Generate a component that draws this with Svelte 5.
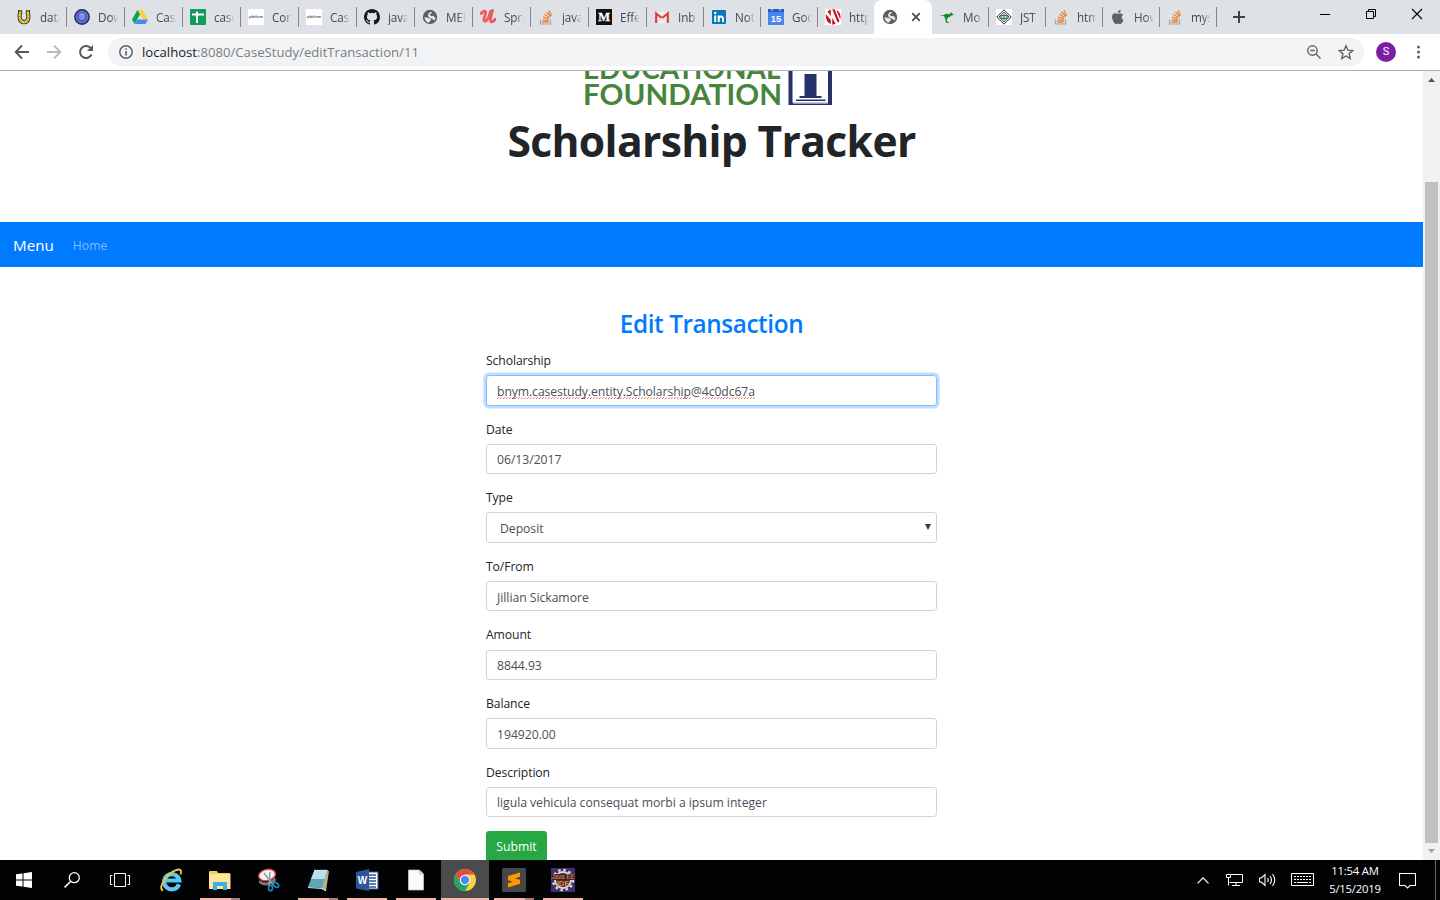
<script>
  const tabs = [
    { icon: 'horseshoe', text: 'data' },
    { icon: 'orb', text: 'Dow' },
    { icon: 'drive', text: 'Cas' },
    { icon: 'sheet', text: 'case' },
    { icon: 'platform', text: 'Cor' },
    { icon: 'platform', text: 'Cas' },
    { icon: 'github', text: 'java' },
    { icon: 'globe', text: 'MEI' },
    { icon: 'udemy', text: 'Spri' },
    { icon: 'stack', text: 'java' },
    { icon: 'medium', text: 'Effe' },
    { icon: 'gmail', text: 'Inb' },
    { icon: 'linkedin', text: 'Not' },
    { icon: 'calendar', text: 'Goo' },
    { icon: 'stripes', text: 'http' },
    { icon: 'globe', text: '', active: true },
    { icon: 'kangaroo', text: 'Mo' },
    { icon: 'diamond', text: 'JST' },
    { icon: 'stack', text: 'htm' },
    { icon: 'apple', text: 'How' },
    { icon: 'stack', text: 'mys' }
  ];
  const fields = [
    { label: 'Scholarship', value: '', focus: true },
    { label: 'Date', value: '06/13/2017' },
    { label: 'Type', value: 'Deposit', select: true },
    { label: 'To/From', value: 'Jillian Sickamore' },
    { label: 'Amount', value: '8844.93' },
    { label: 'Balance', value: '194920.00' },
    { label: 'Description', value: 'ligula vehicula consequat morbi a ipsum integer' }
  ];
  const apps = ['ie', 'folder', 'snip', 'notepad', 'word', 'file', 'chrome', 'sublime', 'eclipse'];
</script>

{#snippet favicon(kind)}
  <svg class="fav" viewBox="0 0 16 16" width="16" height="16">
    {#if kind === 'horseshoe'}
      <path d="M4.500 2.500C2.500 8 3.500 13.200 8 13.200S13.500 8 11.500 2.500" fill="none" stroke="#2f2a14" stroke-width="4.200" />
      <path d="M4.500 2.500C2.500 8 3.500 13.200 8 13.200S13.500 8 11.500 2.500" fill="none" stroke="#e8cf52" stroke-width="2.400" />
      <path d="M2 2h4M10 2h4" stroke="#3d3513" stroke-width="2.200" /><path d="M3 2h2M11 2h2" stroke="#e8cf52" />
      <path d="M4.300 4C2.500 9 4 13.200 8 13.200S13.500 9 11.700 4" fill="none" stroke="#6b5c1c" stroke-width=".8" stroke-dasharray="1 2" />
    {:else if kind === 'orb'}
      <circle cx="8" cy="8" r="7.900" fill="#22285f" />
      <circle cx="8" cy="8" r="6" fill="#5365cf" stroke="#8791d8" stroke-width=".7" />
      <circle cx="8" cy="8" r="3.800" fill="#7d8ce8" stroke="#4252b5" />
      <path d="M5.500 5.800q2.500-1.800 5 0" stroke="#b5befa" fill="none" />
    {:else if kind === 'drive'}
      <path d="M5.500 1h5L16 10.500h-5z" fill="#ffcf3e" />
      <path d="M5.500 1 0 10.500 2.600 15 8 5.500z" fill="#12a05d" />
      <path d="M5.500 10.500H16L13.400 15H2.600z" fill="#4688f1" />
    {:else if kind === 'sheet'}
      <rect width="16" height="16" rx="1" fill="#109d58" />
      <path d="M2 5.500h12M7 2.500V14" stroke="#fff" stroke-width="2" />
    {:else if kind === 'platform'}
      <rect width="16" height="16" fill="#fff" />
      <text x="1" y="9" font-family="Liberation Sans" font-style="italic" font-size="4" font-weight="bold" textLength="14" lengthAdjust="spacingAndGlyphs" fill="#66615d">platform</text>
    {:else if kind === 'github'}
      <path fill="#181818" d="M8 0C3.580 0 0 3.580 0 8c0 3.540 2.290 6.530 5.470 7.590.4.070.55-.17.55-.38v-1.490c-2.010.37-2.530-.49-2.690-.94-.09-.23-.48-.94-.82-1.130-.28-.15-.68-.52-.01-.53.63-.01 1.080.58 1.230.82.72 1.210 1.870.87 2.330.66.070-.52.28-.87.51-1.070-1.780-.2-3.640-.89-3.640-3.950 0-.87.31-1.590.82-2.150-.08-.2-.36-1.020.08-2.120 0 0 .67-.21 2.200.82a7.400 7.400 0 0 1 4 0c1.530-1.040 2.200-.82 2.200-.82.44 1.100.16 1.920.08 2.120.51.56.82 1.270.82 2.150 0 3.070-1.870 3.750-3.650 3.950.29.25.54.73.54 1.480v2.200c0 .21.15.46.55.38A8 8 0 0 0 16 8c0-4.420-3.580-8-8-8" />
    {:else if kind === 'globe'}
      <circle cx="8" cy="8" r="7.200" fill="#5b5f64" />
      <path d="M7.800 3.200 10.500 2.800 8.800 4.800 7.500 5.600 9.500 7.200 11.500 6.800 12.500 8.500 13.600 8.200Q13.500 10 12.300 11.400L10 9.600H8.200L6 7 6.500 4.500zM2.400 8.300 6 8.800 8.800 10.300 8.600 12 7 12.600 7.300 13.900Q3.200 13.200 2.400 8.300z" fill="#e9ebee" />
    {:else if kind === 'udemy'}
      <path d="M1 4.500Q4 1 5.500 2.800C6.500 4 3 9.500 4 11.300 6 14 9.500 8 10.500 2.500M12.500 1.500C11.500 5 9.500 11 11 12.500q1.700 1.200 4-2.200" fill="none" stroke="#ef5a5f" stroke-width="2.900" stroke-linecap="round" />
    {:else if kind === 'stack'}
      <path d="M2.500 10.500V15h10v-4.500" fill="none" stroke="#a0a7ae" stroke-width="1.200" />
      <path d="M4.300 13h6.200M4.500 10.800l6.200.7M5.100 8.100l6 1.800M6.300 5.300l5.400 3.200M8.500 3l4.300 4.500M11 1.200l2.500 5.500" stroke="#ee8032" stroke-width="1.300" />
    {:else if kind === 'medium'}
      <rect width="16" height="16" fill="#111" />
      <text x="8" y="12.300" text-anchor="middle" font-family="Liberation Serif" font-weight="bold" font-size="12.500" stroke="#fff" stroke-width=".3" fill="#fff">M</text>
    {:else if kind === 'gmail'}
      <rect x="1" y="3" width="14" height="11" fill="#eee" />
      <path d="M2.200 14V4.500L8 9l5.800-4.500V14" fill="none" stroke="#d84336" stroke-width="2.200" />
      <path d="m3.500 13 4.500-4 4.500 4" fill="none" stroke="#ddd" />
    {:else if kind === 'linkedin'}
      <rect x="1" y="1" width="14" height="14" rx="1" fill="#0878b5" />
      <path d="M4.200 6.500V13M7.700 6.500V13M7.700 10q0-2.500 2.200-2.500T12 9.800V13" stroke="#fff" stroke-width="2" fill="none" />
      <circle cx="4.200" cy="4" r="1.200" fill="#fff" />
    {:else if kind === 'calendar'}
      <rect width="16" height="16" rx="1" fill="#4784ed" />
      <path d="M0 1q0-1 1-1h14q1 0 1 1v2H0z" fill="#2859bd" /><path d="M3 1h2M11 1h2" stroke="#dce8ff" />
      <text x="8" y="12.500" text-anchor="middle" font-family="Liberation Sans" font-weight="bold" font-size="9.500" fill="#fff">15</text>
    {:else if kind === 'stripes'}
      <rect width="16" height="16" fill="#fff" />
      <path d="M5.800.600V7L2.500 2.800Q4 1 5.800.600zM.800 5l5 6v4Q.300 13 .800 5zM7.200.300h2.300l5 12-1.700 1.500zM11.200.800Q16.500 3.500 15.300 10.500zM7.200 9l3.500 5.800-3.500.9z" fill="#cb1017" />
    {:else if kind === 'kangaroo'}
      <path d="M.500 6.200 5 6q3-2.300 5.500-.5L12 3l.7 1.200 2.300 1.600-2.500.8L11 7.800 9.200 8.200l-1.400 2L8.500 13H10v.7H7L6.300 10 5 7z" fill="#128a1e" />
    {:else if kind === 'diamond'}
      <rect width="16" height="16" fill="#fff" />
      <path d="m8 .8 7.200 7.200L8 15.200.8 8z" fill="#fff" stroke="#333" />
      <path d="m8 3 5 5-5 5-5-5z" fill="#dce5df" stroke="#50625a" />
      <path d="M5 6.500h6v3H5z" fill="none" stroke="#257c51" stroke-width="1.200" /><path d="M8 5v6" stroke="#555" />
    {:else if kind === 'apple'}
      <path d="M10.800.8q-3 .5-2.800 3.400 2.600-.1 2.800-3.400M8 5.100C3.500 2.700 1.500 6 2.100 9q.8 4.200 3.300 6 1 .3 2.600-.5 1.500.8 2.700.5Q13 13.400 13.600 11q-3.700-2-.5-5.200Q11 3.700 8 5.100" fill="#5f6164" />
    {/if}
  </svg>
{/snippet}

{#snippet appIcon(kind)}
  <svg viewBox="0 0 24 24" width="24" height="24">
    {#if kind === 'ie'}
      <path d="M20 16.200A7.600 7.600 0 1 1 20.300 12.500H7" fill="none" stroke="#5bc8f4" stroke-width="4.200" />
      <path d="M4 22.500C-2 20.500 8 4 19 1.500q4.500-.5 2.500 5" fill="none" stroke="#f4c531" stroke-width="1.900" />
    {:else if kind === 'folder'}
      <path d="M1 4q0-1 1-1h7l1 2h12v16H1z" fill="#f5cd5b" /><path d="M1 6h21.500v15H1z" fill="#ffe69a" />
      <path d="M5 22v-8h14v8h-4v-4H9v4z" fill="#3eaee5" />
    {:else if kind === 'snip'}
      <path d="M2 12q8 6 16-3l1 4Q9 21 2 15z" fill="#777" />
      <ellipse cx="10" cy="7" rx="8.500" ry="5.500" transform="rotate(-12 10 7)" fill="#f4f4f4" stroke="#d94349" stroke-width="1.400" />
      <path d="m7 5 10 13M13 4l-1 15" stroke="#8c9daa" stroke-width="1.500" />
      <ellipse cx="13.500" cy="20" rx="2" ry="2.800" fill="none" stroke="#248fc7" stroke-width="1.500" /><ellipse cx="19" cy="17" rx="3" ry="2" transform="rotate(35 19 17)" fill="none" stroke="#248fc7" stroke-width="1.500" />
    {:else if kind === 'notepad'}
      <path d="m9 2 14 1-3 20-4-2z" fill="#b4b08f" /><path d="M8.500 2H21l-5 18-14-1z" fill="#5fa5b8" /><path d="M8.500 2H21l-2.500 9H5z" fill="#bcdee5" />
      <path d="M8.500 2.500H22" stroke="#e6eeee" stroke-width="1.500" stroke-dasharray="1 1" /><path d="m2 19.500 14 1 4 2.500" fill="none" stroke="#d7e7e7" />
    {:else if kind === 'word'}
      <rect x="11" y="4" width="12" height="17" fill="#fff" stroke="#2b579a" /><path d="M14 7h7M14 10h7M14 13h7M14 16h7M14 19h7" stroke="#2b579a" stroke-width="1.300" />
      <path d="m1 4 13-3v22L1 20.500z" fill="#2b579a" /><text x="7.500" y="16" text-anchor="middle" font-family="Liberation Sans" font-size="10" font-weight="bold" fill="#fff">W</text>
    {:else if kind === 'file'}
      <path d="M4.500 2h11l4 4v16h-15z" fill="#fafafa" stroke="#ccc" stroke-width=".7" /><path d="M15.500 2v4h4" fill="none" stroke="#bbb" />
    {:else if kind === 'chrome'}
      <circle cx="12" cy="12" r="11" fill="#fbce43" />
      <path d="M2.500 6.500A11 11 0 0 1 21.500 6.500H12L7.200 14.700z" fill="#e34c3f" />
      <path d="M2.500 6.500A11 11 0 0 0 12 23l4.800-8.300L12 17l-4.800-2.300z" fill="#20a565" />
      <circle cx="12" cy="12" r="5.300" fill="#fff" /><circle cx="12" cy="12" r="4.200" fill="#4a8af4" />
    {:else if kind === 'sublime'}
      <rect width="24" height="24" rx="1.500" fill="#474747" /><path d="m6 8 12-3.500v4.300L13 10.500l5 1.300v4L6 19.500v-4.300l5-1.500-5-1.500z" fill="#ff9800" />
    {:else}
      <rect width="24" height="24" fill="#413065" /><circle cx="12" cy="12" r="8" fill="#34294e" stroke="#d9d7dd" stroke-width="2" />
      <circle cx="12" cy="12" r="10" fill="none" stroke="#d9d7dd" stroke-width="2.500" stroke-dasharray="2.500 2.740" />
      <rect x="1" y="6" width="22" height="6" fill="#36243b" />
      <text x="12" y="11.300" text-anchor="middle" font-family="Liberation Sans" font-size="6.500" textLength="23" lengthAdjust="spacingAndGlyphs" fill="#f28d22">Java EE</text>
      <text x="12" y="17.500" text-anchor="middle" font-family="Liberation Sans" font-size="7.500" font-weight="bold" fill="#f28d22">IDE</text>
    {/if}
  </svg>
{/snippet}

<div class="screen">
  <div class="strip">
    {#each tabs as tab, i}
      <div class="tab" class:narrow={i > 10 && i !== 15} class:active={tab.active} class:nosep={i === 14}>
        {@render favicon(tab.icon)}
        {#if tab.active}
          <svg class="close" width="10" height="10" viewBox="0 0 10 10"><path d="m1.200 1.200 7.600 7.600m0-7.600L1.200 8.800" stroke="#484b50" stroke-width="1.700" /></svg>
        {:else}
          <span>{tab.text}</span>
        {/if}
      </div>
    {/each}
    <svg class="plus" width="12" height="12" viewBox="0 0 12 12"><path d="M6 0v12M0 6h12" stroke="#3e4145" stroke-width="2" /></svg>
    <div class="window-buttons">
      <svg width="12" height="12" viewBox="0 0 12 12"><path d="M1 6.500h10" stroke="#000" /></svg>
      <svg width="12" height="12" viewBox="0 0 12 12"><path d="M1.500 3.500h7v7h-7zM3.500 3V1.500h7v7H9" fill="none" stroke="#000" /></svg>
      <svg width="12" height="12" viewBox="0 0 12 12"><path d="m1 1 10 10M11 1 1 11" stroke="#000" stroke-width="1.100" /></svg>
    </div>
  </div>

  <div class="toolbar">
    <svg width="16" height="16" viewBox="0 0 16 16"><path d="M15 8H2M8 1.500 1.700 8 8 14.500" fill="none" stroke="#54575b" stroke-width="1.900" /></svg>
    <svg width="16" height="16" viewBox="0 0 16 16"><path d="M1 8h13M8 1.500 14.300 8 8 14.500" fill="none" stroke="#b9bbbe" stroke-width="1.900" /></svg>
    <svg width="16" height="16" viewBox="0 0 16 16"><path d="M13.500 10.500A6 6 0 1 1 12.300 3.800L14 5.500" fill="none" stroke="#54575b" stroke-width="2" /><path d="M15 1v6H9z" fill="#54575b" /></svg>
    <div class="omnibox">
      <svg width="14" height="14" viewBox="0 0 14 14"><circle cx="7" cy="7" r="6.200" fill="none" stroke="#5f6368" stroke-width="1.500" /><path d="M7 6v4.500M7 3.200v1.600" stroke="#5f6368" stroke-width="1.600" /></svg>
      <div class="url"><b>localhost</b>:8080/CaseStudy/editTransaction/11</div>
      <svg class="lens" width="14" height="14" viewBox="0 0 14 14"><circle cx="5.500" cy="5.500" r="4.700" fill="none" stroke="#5f6368" stroke-width="1.400" /><path d="m9 9 4.500 4.500M3.300 5.500h4.400" stroke="#5f6368" stroke-width="1.400" /></svg>
      <svg width="16" height="16" viewBox="0 0 16 16"><path d="m8 1.800 1.900 4.400 4.800.4-3.600 3.200 1.100 4.700L8 12l-4.200 2.500 1.100-4.700-3.600-3.200 4.800-.4z" fill="none" stroke="#5f6368" stroke-width="1.400" /></svg>
    </div>
    <div class="avatar">S</div>
    <svg width="4" height="14" viewBox="0 0 4 14"><g fill="#5f6368"><circle cx="2.500" cy="2" r="1.500" /><circle cx="2.500" cy="7" r="1.500" /><circle cx="2.500" cy="12" r="1.500" /></g></svg>
  </div>

  <div class="viewport">
    <main>
      <header>
        <svg class="logo" width="250" height="35" viewBox="0 0 250 35">
          <g font-family="Lato" font-weight="700" font-size="29" fill="#47863a">
            <text x="-1" y="8.300" textLength="197.500" lengthAdjust="spacingAndGlyphs">EDUCATIONAL</text>
            <text x="-1" y="33.500" textLength="199" lengthAdjust="spacingAndGlyphs">FOUNDATION</text>
          </g>
          <path d="M204.500 0h4v31.500H244V0h4v34h-43.500z" fill="#26336b" />
          <path d="M220.500 3h12v22h5v2h-22v-2h5zM212 28.500h29.500V30H212z" fill="#26336b" />
          <path d="M209 32h35" stroke="#fff" />
        </svg>
        <h1>Scholarship Tracker</h1>
      </header>
      <nav><span class="brand">Menu</span><span class="home">Home</span></nav>
      <form>
        <h2>Edit Transaction</h2>
        {#each fields as field}
          <div class="group">
            <div class="label">{field.label}</div>
            <div class="field" class:focus={field.focus} class:select={field.select}>
              {#if field.focus}
                <span><span class="squiggle">bnym.casestudy.entity.Scholarship</span>@<span class="squiggle">4c0dc67a</span></span>
              {:else}
                <span>{field.value}</span>
              {/if}
              {#if field.select}
                <svg class="arrow" width="6" height="6" viewBox="0 0 6 6"><path d="M0 0h6L3 6z" fill="#343a40" /></svg>
              {/if}
            </div>
          </div>
        {/each}
        <div class="submit">Submit</div>
      </form>
    </main>
    <div class="scrollbar">
      <svg width="7" height="4" viewBox="0 0 7 4"><path d="M0 4 3.500 0 7 4z" fill="#505050" /></svg>
      <div class="thumb"></div>
      <svg width="7" height="4" viewBox="0 0 7 4"><path d="M0 0h7L3.500 4z" fill="#a3a3a3" /></svg>
    </div>
  </div>

  <div class="taskbar">
    <div class="cell"><svg width="16" height="16" viewBox="0 0 16 16"><path d="M0 2.300 6.500 1.400v6.100H0zM7.500 1.200 16 0v7.500H7.500zM0 8.500h6.500v6.100L0 13.700zM7.500 8.500H16V16l-8.500-1.200z" fill="#fff" /></svg></div>
    <div class="cell"><svg width="16" height="16" viewBox="0 0 16 16"><circle cx="10.300" cy="5.700" r="5" fill="none" stroke="#fff" stroke-width="1.300" /><path d="M6.500 9.500.6 15.400" stroke="#fff" stroke-width="1.500" /></svg></div>
    <div class="cell"><svg width="20" height="14" viewBox="0 0 20 14"><path d="M4.500.5h11v13h-11zM2.500 2.500h-2v9h2M17.500 2.500h2v9h-2" fill="none" stroke="#fff" /></svg></div>
    <div class="apps">
      {#each apps as app, i}
        <div class="app" class:running={i === 1 || i > 2} class:multi={app === 'folder' || app === 'notepad' || app === 'sublime'} class:file={app === 'file'} class:current={app === 'chrome'}>{@render appIcon(app)}</div>
      {/each}
    </div>
    <div class="tray">
      <svg width="12" height="7" viewBox="0 0 12 7"><path d="m.5 6.300 5.500-5.500 5.500 5.500" fill="none" stroke="#fff" stroke-width="1.200" /></svg>
      <svg width="17" height="14" viewBox="0 0 17 14"><path d="M5 1.500h11.500v8H3.500M10 9.500v3M6 12.500h8M.5 1.500h4v3h-4zM2.500 5v7.500" fill="none" stroke="#fff" /></svg>
      <svg width="17" height="14" viewBox="0 0 17 14"><path d="M.5 5h2L6 1.500v11L2.500 9h-2zM8.500 5q1.500 2 0 4M11 3q3 4 0 8M13.500 1q4.500 6 0 12" fill="none" stroke="#fff" stroke-width="1.100" /></svg>
      <svg width="23" height="14" viewBox="0 0 23 14"><path d="M.5.500h22v12H.5z" fill="none" stroke="#fff" /><path d="M3 3.500h17M3 6.500h17" stroke="#fff" stroke-dasharray="2 1" /><path d="M3 9.500h2m1 0h11m1 0h2" stroke="#fff" /></svg>
      <div class="clock"><div>11:54 AM</div><div>5/15/2019</div></div>
      <svg width="17" height="17" viewBox="0 0 17 17"><path d="M.5 1.500h16v12H11l-2.500 2.500L6 13.500H.5z" fill="none" stroke="#fff" stroke-width="1.100" /></svg>
    </div>
    <div class="peek"></div>
  </div>
</div>

<style>
  :global(body) { margin: 0; overflow: hidden; }
  * { box-sizing: border-box; }
  svg { display: block; flex: none; }
  .screen { width: 1440px; height: 900px; display: flex; flex-direction: column; background: #fff; font-family: "Open Sans", "Noto Sans", sans-serif; overflow: hidden; }

  .strip { height: 34px; flex: none; background: #dee1e6; display: flex; align-items: stretch; padding-left: 9px; }
  .tab { width: 58px; flex: none; display: flex; align-items: center; padding-left: 7px; position: relative; font-size: 11.700px; letter-spacing: -.1px; color: #45494d; }
  .tab.narrow { width: 57px; }
  .tab.nosep { width: 56px; }
  .tab::after { content: ""; position: absolute; right: 0; top: 7px; width: 1px; height: 20px; background: #85888c; }
  .tab.nosep::after, .tab.active::after { display: none; }
  .tab span { margin-left: 8px; width: 20px; overflow: hidden; white-space: nowrap; -webkit-mask-image: linear-gradient(90deg, #000 60%, transparent); mask-image: linear-gradient(90deg, #000 60%, transparent); }
  .tab.active { background: #fff; border-radius: 8px 8px 0 0; padding-left: 8px; }
  .close { margin-left: 13px; }
  .plus { align-self: center; margin-left: 16px; }
  .window-buttons { margin-left: auto; display: flex; gap: 34px; padding: 8px 17px 0 0; }

  .toolbar { height: 37px; flex: none; border-bottom: 1px solid #b2b0b3; display: flex; align-items: center; padding: 0 20px 0 14px; gap: 16px; }
  .omnibox { width: 1256px; height: 28px; margin-left: -2px; border-radius: 14px; background: #f1f3f4; display: flex; align-items: center; padding: 0 10px 0 11px; }
  .url { flex: 1; margin-left: 9px; font-size: 13.100px; line-height: 20px; letter-spacing: .02px; color: #7a7e83; }
  .url b { font-weight: 400; color: #202124; }
  .lens { margin-right: 17px; }
  .avatar { width: 20px; height: 20px; flex: none; margin-left: -4px; margin-right: 4px; border-radius: 50%; background: #7b1fa2; color: #fff; font: 11px/20px Roboto, sans-serif; text-align: center; }

  .viewport { height: 789px; flex: none; display: flex; overflow: hidden; }
  main { width: 1423px; flex: none; overflow: hidden; }
  header { height: 151px; display: flex; flex-direction: column; align-items: center; }
  .logo { margin-left: -6px; }
  h1 { margin: 4px 0 0; font-size: 42.600px; line-height: 60px; font-weight: 700; letter-spacing: -.65px; color: #212529; white-space: nowrap; }
  nav { height: 45px; background: #007bff; display: flex; align-items: center; padding-left: 13px; gap: 19px; }
  .brand { font-size: 15.200px; color: #fff; }
  .home { font-size: 12.200px; padding-top: 1.500px; color: #80bdff; }
  form { width: 451px; margin: 0 auto; padding-top: 41px; }
  h2 { margin: 0 0 11px; height: 32px; font-size: 24.300px; line-height: 32px; font-weight: 600; letter-spacing: -.4px; color: #007bff; text-align: center; white-space: nowrap; }
  .group { height: 68.600px; color: #212529; }
  .label { height: 24.200px; line-height: 20px; font-size: 12.200px; letter-spacing: -.1px; }
  .field { height: 30.400px; border: 1px solid #ced4da; border-radius: 3.200px; padding: 3px 10px 0; display: flex; align-items: center; font-size: 12.200px; line-height: 20px; letter-spacing: -.03px; color: #495057; white-space: nowrap; }
  .field.focus { border-color: #80bdff; box-shadow: 0 0 0 2.600px #bfdeff; letter-spacing: -.08px; }
  .field.select { padding-left: 13px; padding-right: 5px; justify-content: space-between; }
  .arrow { margin-top: -4px; }
  .squiggle { background-image: repeating-linear-gradient(90deg, #ec6262 0 1px, transparent 1px 3px), repeating-linear-gradient(90deg, transparent 0 1px, #f08b8b 1px 2px, transparent 2px 3px); background-size: 100% 1px, 100% 1px; background-position: 0 calc(100% - 1px), 0 calc(100% - 2px); background-repeat: no-repeat; }
  .submit { width: 61px; height: 31px; margin-top: -.6px; padding-top: 1.600px; border-radius: 3.200px; background: #28a745; color: #fff; font-size: 12.200px; line-height: 30px; text-align: center; }

  .scrollbar { width: 17px; background: #f1f1f1; display: flex; flex-direction: column; align-items: center; padding: 7px 0; }
  .thumb { width: 13px; height: 661px; margin: 100px 0 6px; background: #c1c1c1; }

  .taskbar { height: 40px; flex: none; background: #020305; display: flex; }
  .cell { width: 48px; display: flex; align-items: center; justify-content: center; }
  .apps { display: flex; margin-left: 2px; }
  .app { width: 49px; flex: none; display: flex; align-items: center; justify-content: center; position: relative; }
  .app.file { width: 50px; padding-right: 1px; }
  .app.current { width: 48px; background: #4a4b4d; }
  .app.running::after { content: ""; position: absolute; left: 5px; bottom: 0; width: 40px; height: 2px; background: #fbb4ab; }
  .app.multi::after { background: linear-gradient(90deg, #fbb4ab 31px, #af7d79 31px); }
  .app.current::after { left: 0; width: 48px; }
  .tray { margin-left: auto; display: flex; align-items: center; color: #fff; }
  .tray svg:nth-child(2) { margin-left: 17px; }
  .tray svg:nth-child(3) { margin-left: 16px; }
  .tray svg:nth-child(4) { margin-left: 15px; }
  .clock { width: 64px; margin-left: 9px; font-size: 11.300px; line-height: 18px; letter-spacing: -.2px; text-align: center; white-space: nowrap; }
  .tray svg:last-child { margin-left: 12px; }
  .peek { width: 5px; margin-left: 19px; border-left: 1px solid #66686c; }
</style>
